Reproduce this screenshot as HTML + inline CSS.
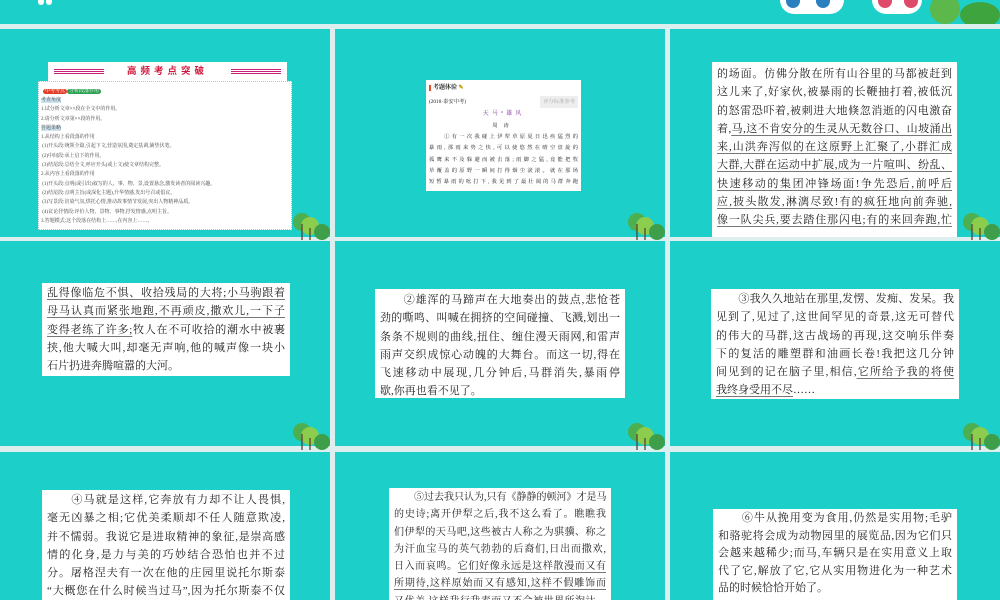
<!DOCTYPE html>
<html><head><meta charset="utf-8">
<style>
*{margin:0;padding:0;box-sizing:border-box}
body{width:1000px;height:600px;background:#dcefee;position:relative;overflow:hidden;font-family:"Liberation Serif","Noto Serif CJK SC",serif;color:#222}
.p{position:absolute;background:#1ccfc9;overflow:hidden}
.box{position:absolute;background:#fff;font-size:11px;letter-spacing:0;overflow:hidden;white-space:nowrap;padding-left:5px;padding-right:5px}
.box div{height:18.3px;line-height:18.3px;text-align:justify;text-align-last:justify}
.box div.l{text-align-last:left}
u{text-decoration:underline;text-decoration-color:#777;text-underline-offset:3px}
.tree{position:absolute;width:40px;height:30px}
.box .s{font-size:5px;line-height:9.3px;height:9.3px;color:#444;padding-left:2px;text-align-last:left}
</style></head><body>
<div class="p" style="left:0;top:0;width:1000px;height:24px">
 <div style="position:absolute;left:38px;top:0;width:6px;height:5px;background:#fff;border-radius:0 0 3px 3px"></div>
 <div style="position:absolute;left:46px;top:0;width:6px;height:5px;background:#fff;border-radius:0 0 3px 3px"></div>
 <div style="position:absolute;left:780px;top:0;width:64px;height:14px;background:#fff;border-radius:0 0 30px 30px"></div>
 <div style="position:absolute;left:786px;top:0;width:14px;height:8px;background:#2a7fc0;border-radius:0 0 8px 8px"></div>
 <div style="position:absolute;left:816px;top:0;width:14px;height:8px;background:#2a7fc0;border-radius:0 0 8px 8px"></div>
 <div style="position:absolute;left:872px;top:0;width:50px;height:14px;background:#fff;border-radius:0 0 30px 30px"></div>
 <div style="position:absolute;left:878px;top:0;width:14px;height:8px;background:#e04a6a;border-radius:0 0 8px 8px"></div>
 <div style="position:absolute;left:904px;top:0;width:14px;height:8px;background:#e04a6a;border-radius:0 0 8px 8px"></div>
 <div style="position:absolute;left:930px;top:-6px;width:30px;height:30px;background:#5cb84a;border-radius:50%"></div>
 <div style="position:absolute;left:960px;top:2px;width:40px;height:26px;background:#3ea53e;border-radius:50%"></div>
</div>

<div class="p" style="left:0;top:29px;width:330px;height:208px"></div>
<div class="p" style="left:335px;top:29px;width:330px;height:208px"></div>
<div class="p" style="left:670px;top:29px;width:330px;height:208px"></div>
<div class="p" style="left:0;top:241px;width:330px;height:205px"></div>
<div class="p" style="left:335px;top:241px;width:330px;height:205px"></div>
<div class="p" style="left:670px;top:241px;width:330px;height:205px"></div>
<div class="p" style="left:0;top:452px;width:330px;height:148px"></div>
<div class="p" style="left:335px;top:452px;width:330px;height:148px"></div>
<div class="p" style="left:670px;top:452px;width:330px;height:148px"></div>

<svg class="tree" style="left:290px;top:210px" viewBox="0 0 40 30"><circle cx="12" cy="12" r="9" fill="#4cb050"/><circle cx="20" cy="16" r="9" fill="#8ccd4e"/><circle cx="32" cy="22" r="8" fill="#3e9e4a"/><path d="M12 14v16M20 18v12" stroke="#5a4030" stroke-width="1.3"/></svg>
<svg class="tree" style="left:625px;top:210px" viewBox="0 0 40 30"><circle cx="12" cy="12" r="9" fill="#4cb050"/><circle cx="20" cy="16" r="9" fill="#8ccd4e"/><circle cx="32" cy="22" r="8" fill="#3e9e4a"/><path d="M12 14v16M20 18v12" stroke="#5a4030" stroke-width="1.3"/></svg>
<svg class="tree" style="left:960px;top:210px" viewBox="0 0 40 30"><circle cx="12" cy="12" r="9" fill="#4cb050"/><circle cx="20" cy="16" r="9" fill="#8ccd4e"/><circle cx="32" cy="22" r="8" fill="#3e9e4a"/><path d="M12 14v16M20 18v12" stroke="#5a4030" stroke-width="1.3"/></svg>
<svg class="tree" style="left:290px;top:420px" viewBox="0 0 40 30"><circle cx="12" cy="12" r="9" fill="#4cb050"/><circle cx="20" cy="16" r="9" fill="#8ccd4e"/><circle cx="32" cy="22" r="8" fill="#3e9e4a"/><path d="M12 14v16M20 18v12" stroke="#5a4030" stroke-width="1.3"/></svg>
<svg class="tree" style="left:625px;top:420px" viewBox="0 0 40 30"><circle cx="12" cy="12" r="9" fill="#4cb050"/><circle cx="20" cy="16" r="9" fill="#8ccd4e"/><circle cx="32" cy="22" r="8" fill="#3e9e4a"/><path d="M12 14v16M20 18v12" stroke="#5a4030" stroke-width="1.3"/></svg>
<svg class="tree" style="left:960px;top:420px" viewBox="0 0 40 30"><circle cx="12" cy="12" r="9" fill="#4cb050"/><circle cx="20" cy="16" r="9" fill="#8ccd4e"/><circle cx="32" cy="22" r="8" fill="#3e9e4a"/><path d="M12 14v16M20 18v12" stroke="#5a4030" stroke-width="1.3"/></svg>

<!-- panel1 -->
<div style="position:absolute;left:48px;top:62px;width:239px;height:20px;background:#fff;text-align:center;font-family:'Liberation Sans','Noto Sans CJK SC',sans-serif;font-weight:bold;color:#d0183c;font-size:9.5px;line-height:20px;letter-spacing:4px">
 <span style="position:absolute;left:6px;top:6px;width:50px;height:7px;background:repeating-linear-gradient(#fff 0 1px,#c8207a 1px 2px)"></span>高频考点突破<span style="position:absolute;right:6px;top:6px;width:50px;height:7px;background:repeating-linear-gradient(#fff 0 1px,#c8207a 1px 2px)"></span></div>
<div class="box" style="left:38px;top:81px;width:254px;height:149px;border:1px dotted #9cd;padding:0">
 <div style="height:14px;line-height:9px;padding:3px 4px;text-align-last:left"><span style="background:#e0402a;color:#fff;font-size:5px;padding:0 2px;border-radius:3px">中考考点</span><span style="background:#2aa050;color:#fff;font-size:5px;padding:0 2px;border-radius:3px">分析段落作用</span></div>
 <div class="s"><span style="background:#cfe6f2">考查角度</span></div>
 <div class="s">1.试分析文章××段在全文中的作用。</div>
 <div class="s">2.请分析文章第××段的作用。</div>
 <div class="s"><span style="background:#cfe6f2">答题策略</span></div>
 <div class="s">1.从结构上看段落的作用</div>
 <div class="s">&nbsp;(1)开头段:统领全篇,引起下文,营造氛围,奠定基调,铺垫伏笔。</div>
 <div class="s">&nbsp;(2)中间段:承上启下的作用。</div>
 <div class="s">&nbsp;(3)结尾段:总结全文,呼应开头(或上文)使文章结构完整。</div>
 <div class="s">2.从内容上看段落的作用</div>
 <div class="s">&nbsp;(1)开头段:点明(或引出)叙写的人、事、物、景,设置悬念,激发读者的阅读兴趣。</div>
 <div class="s">&nbsp;(2)结尾段:点明主旨(或深化主题),升华情感,发出号召或倡议。</div>
 <div class="s">&nbsp;(3)写景段:渲染气氛,烘托心情,推动故事情节发展,突出人物精神品质。</div>
 <div class="s">&nbsp;(4)议论抒情段:评价人物、景物、事物,抒发情感,点明主旨。</div>
 <div class="s">3.答题模式:这个段落在结构上……,在内容上……。</div>
</div>

<!-- panel2 -->
<div class="box" style="left:426px;top:80px;width:155px;height:111px;font-size:5.3px;padding:0 3px">
 <div style="height:16px;line-height:16px;font-weight:bold;font-size:6px;text-align-last:left"><span style="border-left:2px solid #e05020;padding-left:2px">考题体验</span> <span style="color:#c90">✎</span></div>
 <div style="height:12px;line-height:12px;text-align-last:left">(2018·泰安中考)<span style="float:right;background:#eee;color:#aaa;padding:0 3px">评分标准参考</span></div>
 <div style="height:12px;line-height:12px;text-align:center;text-align-last:center;color:#8a3aa0;letter-spacing:3px;font-size:6px">天马°雄风</div>
 <div style="height:12px;line-height:12px;text-align:center;text-align-last:center;letter-spacing:6px">周涛</div>
 <div style="height:11.3px;line-height:11.3px">　　①有一次我碰上伊犁草原夏日迅疾猛烈的</div>
 <div style="height:11.3px;line-height:11.3px">暴雨,那雨来势之快,可以使悠然在晴空盘旋的</div>
 <div style="height:11.3px;line-height:11.3px">孤鹰来不及躲避而被击落;雨脚之猛,竟能把牧</div>
 <div style="height:11.3px;line-height:11.3px">草覆盖的原野一瞬间打得烟尘滚滚。就在那场</div>
 <div style="height:11.3px;line-height:11.3px">短暂暴雨的吆打下,我见到了最壮阔的马群奔跑</div>
</div>

<!-- panel3 -->
<div class="box" style="left:712px;top:62px;width:245px;height:175px;padding-top:3px">
 <div>的场面。仿佛分散在所有山谷里的马都被赶到</div>
 <div>这儿来了,好家伙,被暴雨的长鞭抽打着,被低沉</div>
 <div>的怒雷恐吓着,被刺进大地倏忽消逝的闪电激奋</div>
 <div>着,<u>马,这不肯安分的生灵从无数谷口、山坡涌出</u></div>
 <div><u>来,山洪奔泻似的在这原野上汇聚了,小群汇成</u></div>
 <div><u>大群,大群在运动中扩展,成为一片喧叫、纷乱、</u></div>
 <div><u>快速移动的集团冲锋场面!争先恐后,前呼后</u></div>
 <div><u>应,披头散发,淋漓尽致!有的疯狂地向前奔驰,</u></div>
 <div><u>像一队尖兵,要去踏住那闪电;有的来回奔跑,忙</u></div>
</div>

<!-- panel4 -->
<div class="box" style="left:42px;top:283px;width:248px;height:93px;padding-top:1px">
 <div><u>乱得像临危不惧、收拾残局的大将;小马驹跟着</u></div>
 <div><u>母马认真而紧张地跑,不再顽皮,撒欢儿,一下子</u></div>
 <div><u>变得老练了许多;</u>牧人在不可收拾的潮水中被裹</div>
 <div>挟,他大喊大叫,却毫无声响,他的喊声像一块小</div>
 <div class="l">石片扔进奔腾喧嚣的大河。</div>
</div>

<!-- panel5 -->
<div class="box" style="left:375px;top:289px;width:250px;height:109px;padding-top:2px">
 <div>　　②雄浑的马蹄声在大地奏出的鼓点,悲怆苍</div>
 <div>劲的嘶鸣、叫喊在拥挤的空间碰撞、飞溅,划出一</div>
 <div>条条不规则的曲线,扭住、缠住漫天雨网,和雷声</div>
 <div>雨声交织成惊心动魄的大舞台。而这一切,得在</div>
 <div>飞速移动中展现,几分钟后,马群消失,暴雨停</div>
 <div class="l">歇,你再也看不见了。</div>
</div>

<!-- panel6 -->
<div class="box" style="left:711px;top:289px;width:248px;height:110px;padding-top:1px">
 <div>　　③我久久地站在那里,发愣、发痴、发呆。我</div>
 <div>见到了,见过了,这世间罕见的奇景,这无可替代</div>
 <div>的伟大的马群,这古战场的再现,这交响乐伴奏</div>
 <div>下的复活的雕塑群和油画长卷!我把这几分钟</div>
 <div>间见到的记在脑子里,相信,<u>它所给予我的将使</u></div>
 <div class="l"><u>我终身受用不尽</u>……</div>
</div>

<!-- panel7 -->
<div class="box" style="left:42px;top:490px;width:248px;height:110px;padding-top:1px">
 <div>　　④马就是这样,它奔放有力却不让人畏惧,</div>
 <div>毫无凶暴之相;它优美柔顺却不任人随意欺凌,</div>
 <div>并不懦弱。我说它是进取精神的象征,是崇高感</div>
 <div>情的化身,是力与美的巧妙结合恐怕也并不过</div>
 <div>分。屠格涅夫有一次在他的庄园里说托尔斯泰</div>
 <div>“大概您在什么时候当过马”,因为托尔斯泰不仅</div>
</div>

<!-- panel8 -->
<div class="box" style="left:389px;top:488px;width:222px;height:112px;padding-top:1px;font-size:10px">
 <div style="height:17.3px;line-height:17.3px">　　⑤过去我只认为,只有《静静的顿河》才是马</div>
 <div style="height:17.3px;line-height:17.3px">的史诗;离开伊犁之后,我不这么看了。瞧瞧我</div>
 <div style="height:17.3px;line-height:17.3px">们伊犁的天马吧,这些被古人称之为骐骥、称之</div>
 <div style="height:17.3px;line-height:17.3px">为汗血宝马的英气勃勃的后裔们,日出而撒欢,</div>
 <div style="height:17.3px;line-height:17.3px">日入而哀鸣。<u>它们好像永远是这样散漫而又有</u></div>
 <div style="height:17.3px;line-height:17.3px"><u>所期待,这样原始而又有感知,这样不假雕饰而</u></div>
 <div style="height:17.3px;line-height:17.3px"><u>又优美,这样我行我素而又不会被世界所淘汰。</u></div>
</div>

<!-- panel9 -->
<div class="box" style="left:713px;top:509px;width:244px;height:91px;padding-top:1px">
 <div style="height:17.5px;line-height:17.5px">　　⑥牛从挽用变为食用,仍然是实用物;毛驴</div>
 <div style="height:17.5px;line-height:17.5px">和骆驼将会成为动物园里的展览品,因为它们只</div>
 <div style="height:17.5px;line-height:17.5px">会越来越稀少;而马,车辆只是在实用意义上取</div>
 <div style="height:17.5px;line-height:17.5px">代了它,解放了它,它从实用物进化为一种艺术</div>
 <div class="l" style="height:17.5px;line-height:17.5px">品的时候恰恰开始了。</div>
</div>
</body></html>
